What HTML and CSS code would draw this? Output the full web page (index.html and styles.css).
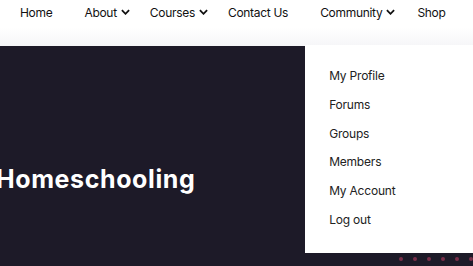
FILE: index.html
```html
<!DOCTYPE html>
<html lang="en">
<head>
  <meta charset="UTF-8" />
  <title>Homeschooling</title>
  <link rel="stylesheet" href="styles.css">
</head>
<body>
  <header class="site-header">
    <nav class="main-nav">
      <a class="nav-link wide" href="#">Home</a>
      <a class="nav-link" href="#">About<svg class="chev" viewBox="0 0 10 6"><path d="M1 1l4 4 4-4"/></svg></a>
      <a class="nav-link" href="#">Courses<svg class="chev" viewBox="0 0 10 6"><path d="M1 1l4 4 4-4"/></svg></a>
      <a class="nav-link wide" href="#">Contact Us</a>
      <div class="nav-item">
        <a class="nav-link" href="#">Community<svg class="chev" viewBox="0 0 10 6"><path d="M1 1l4 4 4-4"/></svg></a>
        <ul class="dropdown">
          <li><a href="#">My Profile</a></li>
          <li><a href="#">Forums</a></li>
          <li><a href="#">Groups</a></li>
          <li><a href="#">Members</a></li>
          <li><a href="#">My Account</a></li>
          <li><a href="#">Log out</a></li>
        </ul>
      </div>
      <a class="nav-link" href="#">Shop</a>
    </nav>
  </header>

  <section class="hero">
    <h1>Homeschooling</h1>
    <div class="dots">
      <span></span><span></span><span></span><span></span><span></span><span></span>
    </div>
  </section>
</body>
</html>
```

FILE: styles.css
```css
body {
  margin: 0;
  font-family: "Inter", "Lato", sans-serif;
  background: #1d1a28;
  overflow: hidden;
  height: 266px;
}

a {
  color: #111;
  text-decoration: none;
}

.site-header {
  height: 46px;
  background: linear-gradient(180deg, #ffffff 60%, #f6f6f8 100%);
}

.main-nav {
  display: flex;
  align-items: center;
  gap: 20px;
  height: 24px;
  padding-left: 20px;
}

.nav-link {
  display: flex;
  align-items: center;
  font-size: 12px;
  letter-spacing: -0.3px;
  white-space: nowrap;
}

.nav-link.wide {
  margin-right: 12px;
}

.nav-item {
  position: relative;
  margin-right: 2px;
}

.chev {
  width: 9px;
  height: 6px;
  margin-left: 4px;
  fill: none;
  stroke: #111;
  stroke-width: 2;
}

.dropdown {
  position: absolute;
  top: 40px;
  left: -15px;
  width: 168px;
  margin: 0;
  padding: 17px 0 19px 24px;
  list-style: none;
  background: #fff;
  box-sizing: border-box;
  z-index: 5;
}

.dropdown li {
  height: 28.7px;
  display: flex;
  align-items: center;
}

.dropdown a {
  font-size: 12px;
  letter-spacing: -0.2px;
  color: #222;
}

.hero {
  position: relative;
  height: 220px;
}

.hero h1 {
  margin: 0 0 0 -4px;
  padding-top: 118px;
  color: #fff;
  font-size: 25px;
  font-weight: 700;
  letter-spacing: 0.6px;
}

.dots {
  position: absolute;
  left: 399px;
  top: 211px;
  display: flex;
  gap: 10px;
}

.dots span {
  width: 4px;
  height: 4px;
  border-radius: 50%;
  background: #7a2f4a;
}
```
